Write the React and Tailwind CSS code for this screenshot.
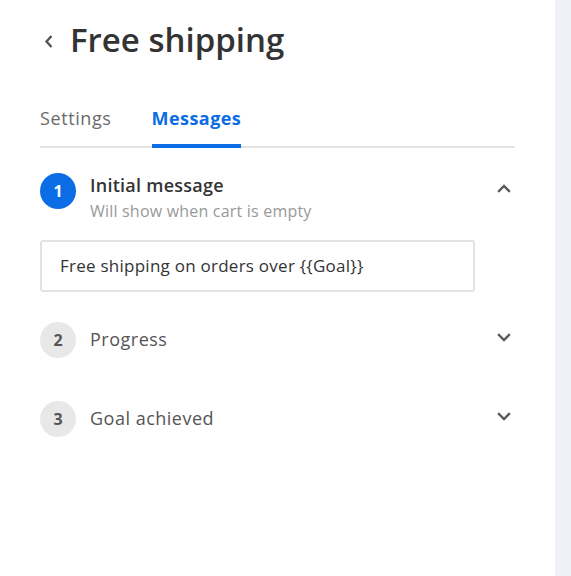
import React from "react";

const font = { fontFamily: '"Open Sans", "Liberation Sans", sans-serif' };

function Chevron({ dir = "down", className = "" }) {
  const d = dir === "up" ? "M2 8 L7 3 L12 8" : "M2 3 L7 8 L12 3";
  return (
    <svg width="14" height="11" viewBox="0 0 14 11" className={className}>
      <path d={d} fill="none" stroke="#5a5a5a" strokeWidth="2.4" strokeLinecap="square" />
    </svg>
  );
}

function Step({ n, title, subtitle, active, open, children }) {
  return (
    <div>
      <div className="flex items-start">
        <div
          className={
            active
              ? "w-[36px] h-[36px] rounded-full bg-[#0a6de6] text-white flex items-center justify-center text-[16px] font-bold shrink-0"
              : "w-[36px] h-[36px] rounded-full bg-[#e8e8e8] text-[#555] flex items-center justify-center text-[16px] font-bold shrink-0"
          }
        >
          {n}
        </div>
        <div className={active ? "ml-[14px] flex-1 pt-[2px]" : "ml-[14px] flex-1 pt-[6px]"}>
          <div
            className={
              active
                ? "text-[18px] leading-[20px] font-semibold text-[#333] tracking-[0.25px]"
                : "text-[18px] leading-[22px] text-[#555] tracking-[0.5px]"
            }
          >
            {title}
          </div>
          {subtitle && (
            <div className="text-[16px] leading-[20px] text-[#999] mt-[6px] tracking-[0.2px]">
              {subtitle}
            </div>
          )}
        </div>
        <div className="pt-[10px] pr-[4px]">
          <Chevron dir={open ? "up" : "down"} />
        </div>
      </div>
      {children}
    </div>
  );
}

export default function App() {
  return (
    <div className="flex w-[571px] h-[576px] bg-white" style={font}>
      <div className="w-[555px] pl-[40px] pr-[40px]">
        <div className="flex items-center pt-[20px]">
          <svg width="10" height="15" viewBox="0 0 10 15" className="ml-[4px] mt-[2px]">
            <path d="M7.5 2 L2.5 7.5 L7.5 13" fill="none" stroke="#555" strokeWidth="2.4" />
          </svg>
          <h1 className="ml-[16px] text-[33px] leading-[40px] font-semibold text-[#333]">
            Free shipping
          </h1>
        </div>

        <div className="mt-[45px] flex border-b-2 border-[#e2e2e2]">
          <div className="text-[18px] text-[#6b6b6b] pb-[14px] tracking-[0.6px]">Settings</div>
          <div className="ml-[40px] text-[18px] font-bold text-[#0a6de6] pb-[11px] border-b-4 border-[#0a6de6] -mb-[2px] tracking-[0.45px]">
            Messages
          </div>
        </div>

        <div className="mt-[25px]">
          <Step n="1" title="Initial message" subtitle="Will show when cart is empty" active open>
            <div className="mt-[19px] w-[435px] h-[52px] border-2 border-[#e2e2e2] rounded-[3px] flex items-center pl-[18px] text-[17px] text-[#333] tracking-[0.25px]">
              {"Free shipping on orders over {{Goal}}"}
            </div>
          </Step>
          <div className="mt-[30px]">
            <Step n="2" title="Progress" />
          </div>
          <div className="mt-[43px]">
            <Step n="3" title="Goal achieved" />
          </div>
        </div>
      </div>
      <div className="flex-1 bg-[#eef1f7]" />
    </div>
  );
}
